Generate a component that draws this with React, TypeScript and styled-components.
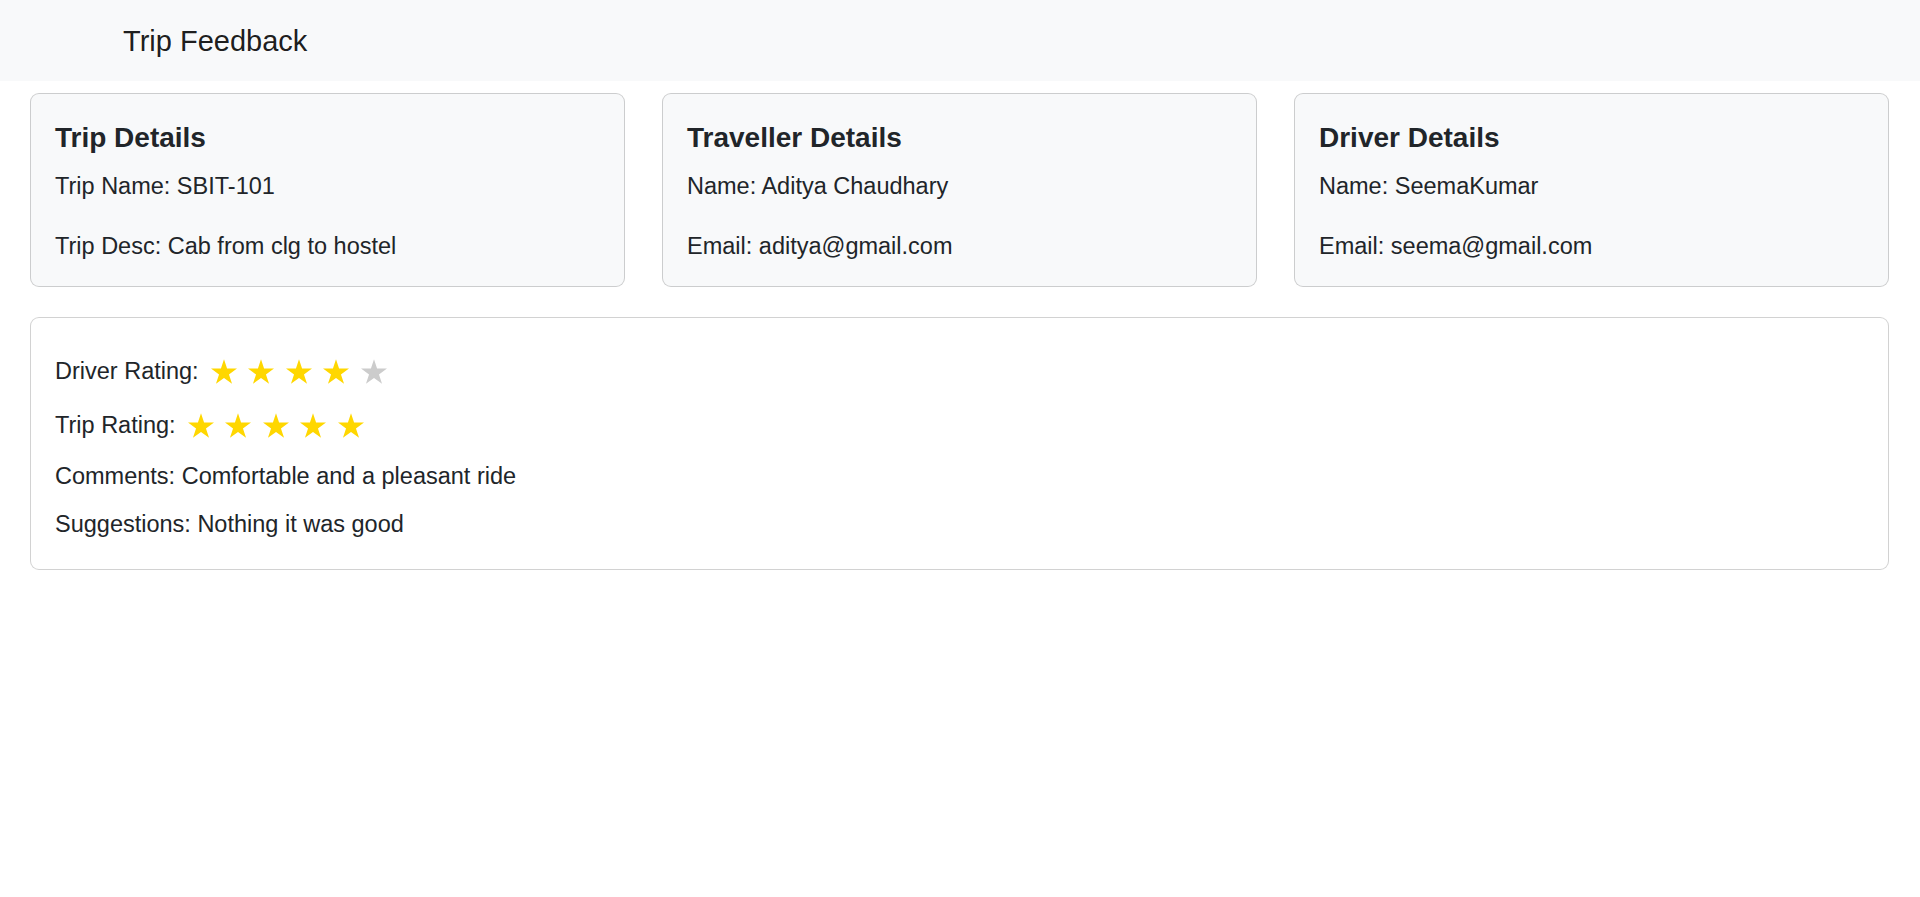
import React from "react";
import styled, { createGlobalStyle } from "styled-components";

const GlobalStyle = createGlobalStyle`
  html, body {
    margin: 0;
    padding: 0;
    background: #ffffff;
  }
  body {
    font-family: "Liberation Sans", Arial, sans-serif;
    color: #212529;
    -webkit-font-smoothing: antialiased;
  }
  * { box-sizing: border-box; }
`;

const NavBar = styled.header`
  height: 81px;
  background: #f8f9fa;
  display: flex;
  align-items: center;
  padding: 2px 0 0 123px;
`;

const Brand = styled.span`
  font-size: 29px;
  line-height: 45px;
  color: rgba(0, 0, 0, 0.9);
`;

const Main = styled.main`
  padding: 12px 31px 0 30px;
`;

const CardGrid = styled.div`
  display: grid;
  grid-template-columns: repeat(3, 1fr);
  gap: 37px;
`;

const Card = styled.section<{ $tone?: "light" | "white" }>`
  border: 1px solid rgba(0, 0, 0, 0.175);
  border-radius: 9px;
  background: ${(p) => (p.$tone === "light" ? "#f8f9fa" : "#ffffff")};
`;

const CardBody = styled.div`
  padding: 26px 24px 22px;
`;

const CardTitle = styled.h5`
  margin: 0 0 12px;
  font-size: 28px;
  font-weight: 700;
  line-height: 36px;
  color: #212529;
`;

const CardText = styled.p`
  margin: 0 0 24px;
  font-size: 23.5px;
  line-height: 36px;
  &:last-child {
    margin-bottom: 0;
  }
`;

const FeedbackCard = styled(Card)`
  margin-top: 30px;
`;

const FeedbackBody = styled.div`
  padding: 30px 24px 15px;
`;

const RatingRow = styled.div`
  display: flex;
  align-items: center;
  height: 46px;
  margin-bottom: 8px;
  gap: 12px;
  font-size: 23.5px;
  line-height: 36px;
  &:nth-of-type(2) {
    margin-bottom: 10px;
  }
`;

const Stars = styled.div`
  display: flex;
  align-items: center;
  gap: 11.5px;
`;

const StarSvg = styled.svg`
  display: block;
  width: 26px;
  height: 25px;
`;

const FeedbackText = styled.p`
  margin: 0 0 12px;
  font-size: 23.5px;
  line-height: 36px;
`;

const Star = ({ filled }: { filled: boolean }) => (
  <StarSvg viewBox="2.45 0 95.1 90.45" aria-hidden="true">
    <polygon
      points="50,0 61.23,34.55 97.55,34.55 68.17,55.9 79.39,90.45 50,69.1 20.61,90.45 31.83,55.9 2.45,34.55 38.77,34.55"
      fill={filled ? "#ffd700" : "#cccccc"}
    />
  </StarSvg>
);

const StarRating = ({ value, max = 5 }: { value: number; max?: number }) => (
  <Stars>
    {Array.from({ length: max }, (_, i) => (
      <Star key={i} filled={i < value} />
    ))}
  </Stars>
);

const details = [
  { title: "Trip Details", lines: ["Trip Name: SBIT-101", "Trip Desc: Cab from clg to hostel"] },
  { title: "Traveller Details", lines: ["Name: Aditya Chaudhary", "Email: aditya@gmail.com"] },
  { title: "Driver Details", lines: ["Name: SeemaKumar", "Email: seema@gmail.com"] },
];

export default function App() {
  return (
    <>
      <GlobalStyle />
      <NavBar>
        <Brand>Trip Feedback</Brand>
      </NavBar>
      <Main>
        <CardGrid>
          {details.map((d) => (
            <Card key={d.title} $tone="light">
              <CardBody>
                <CardTitle>{d.title}</CardTitle>
                {d.lines.map((l) => (
                  <CardText key={l}>{l}</CardText>
                ))}
              </CardBody>
            </Card>
          ))}
        </CardGrid>
        <FeedbackCard $tone="white">
          <FeedbackBody>
            <RatingRow>
              <span>Driver Rating:</span>
              <StarRating value={4} />
            </RatingRow>
            <RatingRow>
              <span>Trip Rating:</span>
              <StarRating value={5} />
            </RatingRow>
            <FeedbackText>Comments: Comfortable and a pleasant ride</FeedbackText>
            <FeedbackText>Suggestions: Nothing it was good</FeedbackText>
          </FeedbackBody>
        </FeedbackCard>
      </Main>
    </>
  );
}
